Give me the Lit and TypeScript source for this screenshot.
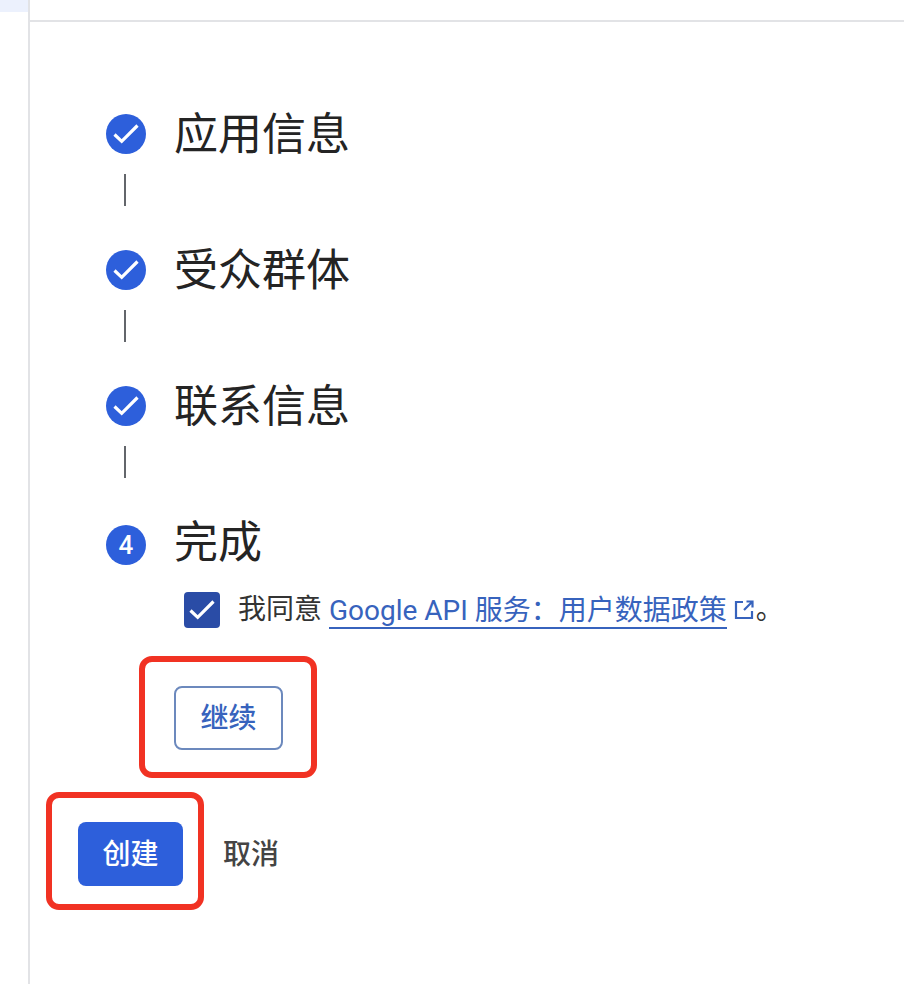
import { LitElement, html, css } from "lit";
import { customElement } from "lit/decorators.js";

@customElement("app-root")
export class AppRoot extends LitElement {
  static styles = css`
    :host { display: flex; width: 904px; height: 984px; overflow: hidden; background: #fff; font-family: Roboto, "Noto Sans CJK SC", sans-serif; color: #202124; position: relative; }
    .side { width: 28px; flex: none; border-right: 2px solid #e2e3e6; }
    .side-active { height: 12px; background: #ecf1fd; }
    .main { flex: 1; display: flex; flex-direction: column; min-width: 0; }
    .top { height: 20px; flex: none; border-bottom: 2px solid #e2e3e6; }
    .steps { padding: 92px 0 0 76px; display: flex; flex-direction: column; }
    .step { display: flex; align-items: center; gap: 28px; height: 40px; }
    .step.final { margin-top: 3px; }
    .circle { width: 40px; height: 40px; border-radius: 50%; background: #2d5fdb; color: #fff; display: flex; align-items: center; justify-content: center; font-size: 26px; font-weight: 500; flex: none; }
    .circle svg, .check svg { width: 36px; height: 36px; display: block; }
    .title { font-size: 44px; line-height: 40px; color: #242424; white-space: nowrap; padding-top: 2px; }
    .final .title { padding-top: 0; padding-bottom: 4px; }
    .line { width: 2px; height: 32px; background: #63666b; margin: 20px 0 44px 18px; }
    .agree { display: flex; align-items: center; margin: 27px 0 0 78px; height: 36px; }
    .check { width: 36px; height: 36px; border-radius: 4px; background: #2a4ca6; display: flex; align-items: center; justify-content: center; flex: none; margin-right: 18px; }
    .agree-text { font-size: 28px; line-height: 36px; color: #333; white-space: nowrap; display: flex; align-items: center; }
    .link { color: #3763bd; text-decoration: none; border-bottom: 2px solid #3763bd; margin-left: 7px; line-height: 33px; height: 33px; margin-top: 2px; }
    .ext { width: 24px; height: 24px; margin-left: 5px; flex: none; }
    .cont { align-self: flex-start; margin: 58px 0 0 144px; width: 109px; height: 64px; box-sizing: border-box; border: 2px solid #6c89bd; border-radius: 8px; background: #fff; color: #3763bd; font: 500 28px/1 Roboto, "Noto Sans CJK SC", sans-serif; padding: 2px 0 0; }
    .actions { display: flex; align-items: center; margin: 72px 0 0 48px; gap: 40px; }
    .create { width: 105px; height: 64px; border: 0; border-radius: 8px; background: #2d5fdb; color: #fff; font: 500 28px/1 Roboto, "Noto Sans CJK SC", sans-serif; padding: 2px 0 0; }
    .cancel { font-size: 28px; font-weight: 500; color: #444; padding-bottom: 4px; }
    .mark { position: absolute; box-sizing: border-box; border: 6px solid #f13223; border-radius: 13px; pointer-events: none; }
    .mark.a { left: 139px; top: 656px; width: 178px; height: 122px; }
    .mark.b { left: 46px; top: 792px; width: 158px; height: 118px; }
  `;

  private checkIcon() {
    return html`<svg viewBox="0 0 36 36" fill="none" stroke="#fff" stroke-width="3.2"><path d="M6.5 18.5l7.2 6.8L29.5 9.5"/></svg>`;
  }

  private step(title: string) {
    return html`<div class="step"><div class="circle">${this.checkIcon()}</div><div class="title">${title}</div></div><div class="line"></div>`;
  }

  render() {
    return html`
      <div class="side"><div class="side-active"></div></div>
      <div class="main">
        <div class="top"></div>
        <div class="steps">
          ${this.step("应用信息")}
          ${this.step("受众群体")}
          ${this.step("联系信息")}
          <div class="step final"><div class="circle">4</div><div class="title">完成</div></div>
          <div class="agree">
            <div class="check">${this.checkIcon()}</div>
            <div class="agree-text">我同意<a class="link">Google API 服务：用户数据政策</a>
              <svg class="ext" viewBox="0 0 24 24" fill="none" stroke="#3763bd" stroke-width="2.2"><path d="M11 4H4v16h16v-7M12 12l8.5-8.5M14.5 3.5h6v6"/></svg>
              <span>。</span></div>
          </div>
        </div>
        <button class="cont">继续</button>
        <div class="actions">
          <button class="create">创建</button>
          <span class="cancel">取消</span>
        </div>
      </div>
      <div class="mark a"></div>
      <div class="mark b"></div>
    `;
  }
}
